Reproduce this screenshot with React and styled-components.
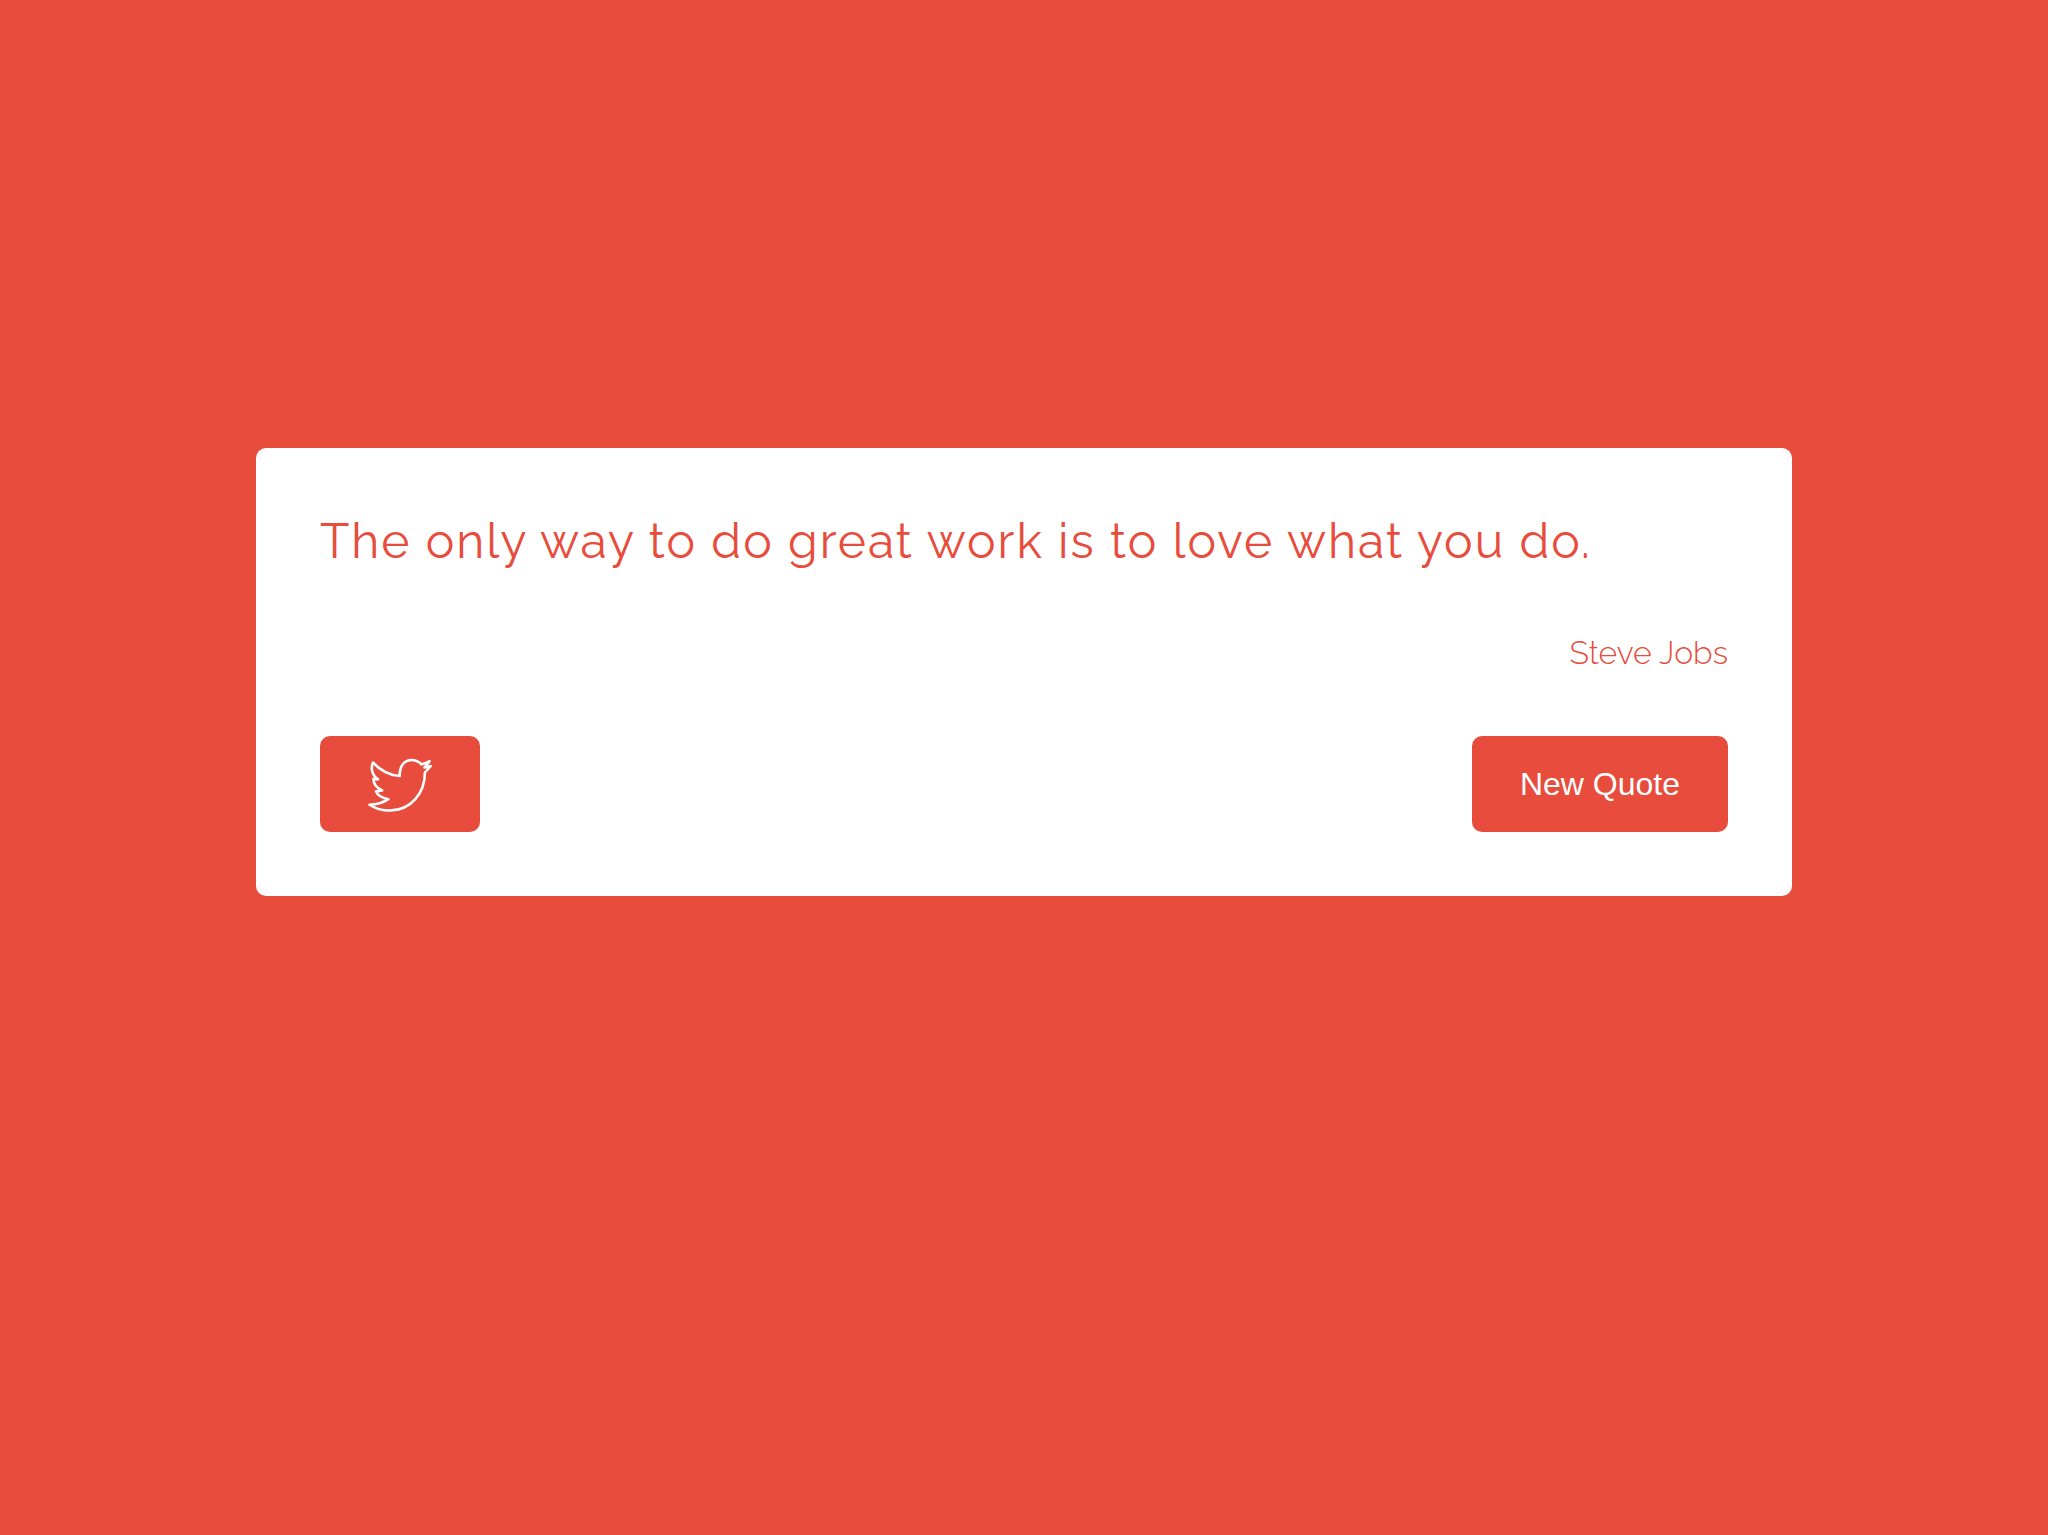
import React, { useState } from "react";
import styled, { createGlobalStyle } from "styled-components";

const accent = "#e74c3c";

const GlobalStyle = createGlobalStyle`
  *, *::before, *::after { box-sizing: border-box; }
  body { margin: 0; background: ${accent}; }
`;

const Page = styled.main`
  min-height: 100vh;
  padding-top: 448px;
  background: ${accent};
  color: ${accent};
  font-family: Raleway, Lato, sans-serif;
`;

const Card = styled.section`
  width: 75%;
  margin: 0 auto;
  padding: 64px;
  border-radius: 10px;
  background: #fff;
`;

const Quote = styled.blockquote`
  margin: 0;
  font-size: 48px;
  font-weight: 400;
  line-height: 58px;
  letter-spacing: 2px;
`;

const Author = styled.p`
  margin: 64px 0;
  font-size: 32px;
  font-weight: 300;
  line-height: 38px;
  text-align: right;
`;

const Actions = styled.div`
  display: flex;
  justify-content: space-between;
`;

const Button = styled.button`
  display: flex;
  align-items: center;
  justify-content: center;
  height: 96px;
  padding: 0 48px;
  border: 0;
  border-radius: 10px;
  background: ${accent};
  color: #fff;
  font-family: "Liberation Sans", Arial, sans-serif;
  font-size: 32px;
  line-height: 38px;
  cursor: pointer;
`;

const BirdIcon = styled.svg`
  width: 64px;
  height: 64px;
  fill: none;
  stroke: #fff;
  stroke-width: 2.6;
  stroke-linejoin: round;
`;

const quotes = [
  { text: "The only way to do great work is to love what you do.", author: "Steve Jobs" },
];

export default function App() {
  const [index, setIndex] = useState(0);
  const { text, author } = quotes[index];
  return (
    <Page>
      <GlobalStyle />
      <Card>
        <Quote>{text}</Quote>
        <Author>{author}</Author>
        <Actions>
          <Button type="button" aria-label="Tweet this quote">
            <BirdIcon viewBox="0 0 64 64" aria-hidden="true">
              <path d="M31.7 24C31.5 14 36 8 43.7 8C47.8 8 51 9.6 53.5 12.4C56 12 58.5 11 61.5 9.2L56.5 15.6L62.8 14L56.9 20.5C56.9 41 43 58.5 22 58.5C14 58.5 7 56.5 1.5 52.7C8.5 52.6 15 50.8 20.3 47.2C14 46 9.5 43.5 8 39.4L14.2 38.4C8.8 36.2 5.5 32.8 5.5 26.8L10 27.4C3.4 22.5 2.7 15.5 5 10.5C12.5 18.5 21.5 23.3 31.7 24Z" />
            </BirdIcon>
          </Button>
          <Button type="button" onClick={() => setIndex((index + 1) % quotes.length)}>
            New Quote
          </Button>
        </Actions>
      </Card>
    </Page>
  );
}
